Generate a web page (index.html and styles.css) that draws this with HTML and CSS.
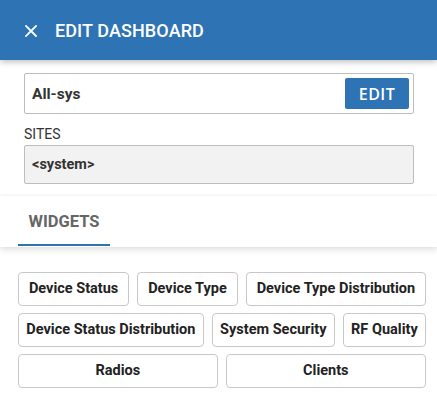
FILE: index.html
```html
<!DOCTYPE html>
<html>
<head>
<meta charset="utf-8">
<link rel="stylesheet" href="styles.css">
</head>
<body>
<header class="topbar">
  <svg class="close" width="12" height="12" viewBox="0 0 12 12"><path d="M1 1L11 11M11 1L1 11" stroke="#fff" stroke-width="1.8" stroke-linecap="square"/></svg>
  <h1 class="title">EDIT DASHBOARD</h1>
</header>
<main class="content">
  <div class="form">
    <div class="field name-field">
      <span class="field-value">All-sys</span>
      <button class="edit-btn">EDIT</button>
    </div>
    <label class="label">SITES</label>
    <div class="field sites-field"><span class="field-value">&lt;system&gt;</span></div>
  </div>
  <nav class="tabs">
    <div class="tab active">WIDGETS</div>
  </nav>
  <div class="widgets">
    <div class="row">
      <button class="chip">Device Status</button>
      <button class="chip">Device Type</button>
      <button class="chip">Device Type Distribution</button>
    </div>
    <div class="row">
      <button class="chip">Device Status Distribution</button>
      <button class="chip">System Security</button>
      <button class="chip">RF Quality</button>
    </div>
    <div class="row">
      <button class="chip">Radios</button>
      <button class="chip">Clients</button>
    </div>
  </div>
</main>
</body>
</html>
```
FILE: styles.css
```css
* { box-sizing: border-box; }
html, body { margin: 0; padding: 0; background: #fff; }
body { font-family: Roboto, "Liberation Sans", sans-serif; color: #333; width: 437px; overflow: hidden; }

.topbar {
  height: 60px;
  background: #2e74b5;
  display: flex;
  align-items: center;
  padding-left: 25px;
  box-shadow: 0 2px 6px rgba(0,0,0,0.25);
  position: relative;
  z-index: 2;
}
.close { margin-top: 1px; }
.title {
  margin: 0 0 0 18px;
  color: #fff;
  font-size: 18px;
  font-weight: 500;
  letter-spacing: 0.1px;
}

.form { padding: 13px 23px 12px 24px; }
.field {
  height: 41px;
  border: 1px solid #bdbdbd;
  border-radius: 2px;
  display: flex;
  align-items: center;
  padding-left: 7px;
}
.name-field { justify-content: space-between; padding-right: 4px; }
.field-value { font-size: 15.5px; font-weight: 700; color: #333; }
.sites-field { background: #f2f2f2; height: 39px; }
.sites-field .field-value { font-size: 14.5px; }
.edit-btn {
  width: 64px;
  height: 31px;
  border: none;
  border-radius: 2px;
  background: #2e74b5;
  color: #fff;
  font-family: "Open Sans", Roboto, sans-serif;
  font-size: 16px;
  font-weight: 600;
  letter-spacing: 0.5px;
  padding: 0;
}
.label {
  display: block;
  font-size: 14px;
  color: #333;
  margin: 12px 0 3px;
  line-height: 16px;
}

.tabs {
  height: 51px;
  background: #fff;
  box-shadow: 0 3px 6px rgba(0,0,0,0.12), 0 -1px 3px rgba(0,0,0,0.04);
  padding-left: 18px;
  display: flex;
  align-items: flex-end;
}
.tab {
  width: 92px;
  height: 49px;
  display: flex;
  align-items: center;
  justify-content: center;
  font-size: 16.5px;
  font-weight: 700;
  color: #666;
  border-bottom: 2px solid #2e74b5;
  padding-top: 1px;
  margin-bottom: 1px;
}

.widgets {
  padding: 25px 11px 0 18px;
  display: flex;
  flex-direction: column;
  gap: 7px;
}
.row { display: flex; gap: 8px; }
.chip {
  height: 34px;
  border: 1px solid #c8c8c8;
  border-radius: 4px;
  background: #fff;
  font-family: Roboto, "Liberation Sans", sans-serif;
  font-size: 14.5px;
  line-height: 1;
  font-weight: 700;
  color: #222;
  padding: 0 7px;
  flex: 1 1 auto;
  min-width: 0;
  white-space: nowrap;
  margin: 0;
}
```
